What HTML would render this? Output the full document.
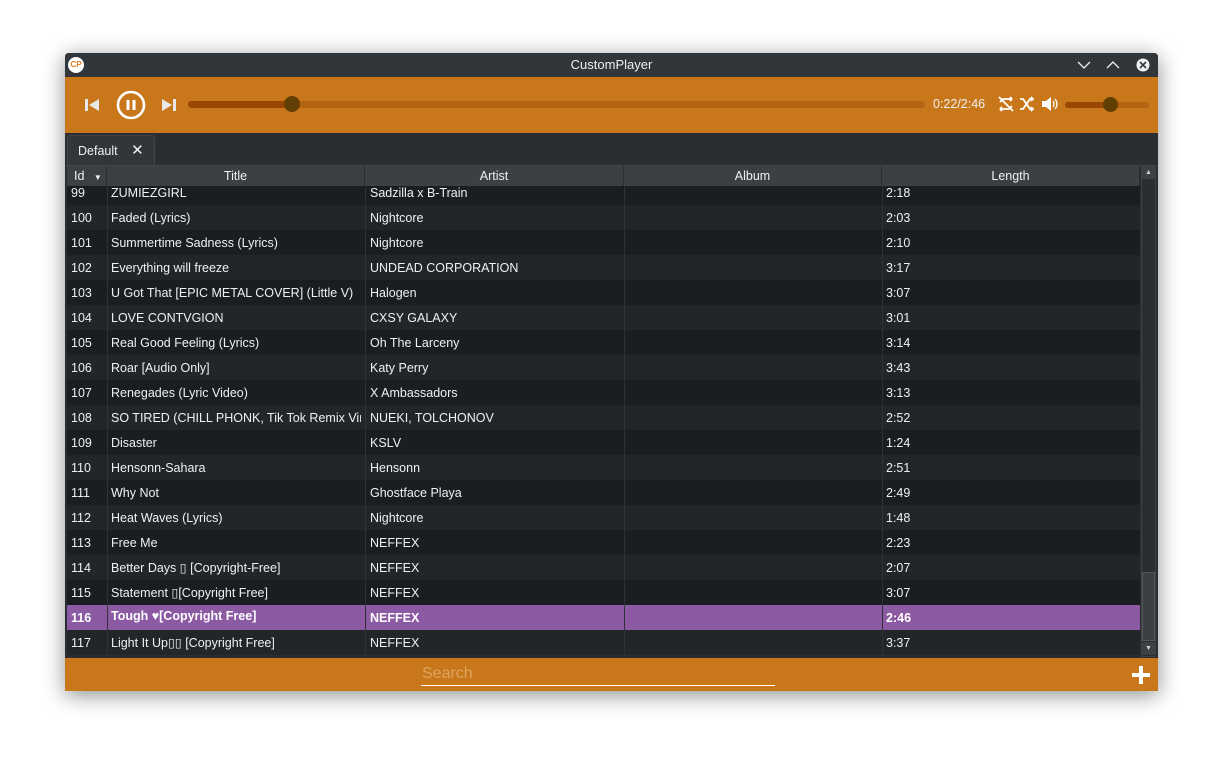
<!DOCTYPE html>
<html><head><meta charset="utf-8"><style>
*{margin:0;padding:0;box-sizing:border-box}
body{width:1223px;height:768px;background:#fff;position:relative;overflow:hidden;font-family:"Liberation Sans","DejaVu Sans",sans-serif;color:#eff0f1}
.a{position:absolute}
#win{left:65px;top:53px;width:1093px;height:638px;background:#2a2e32;box-shadow:0 4px 22px rgba(0,0,0,.45);border-radius:4px 4px 0 0;overflow:hidden}
.row{position:absolute;left:2px;width:1073px;height:25px;font-size:12.5px;line-height:26px}
.row span{position:absolute;top:0;white-space:nowrap;overflow:hidden}
.c0{left:4px;width:36px}.c1{left:44px;width:250px}.c2{left:303px;width:250px}.c4{left:819px}
.d{background:#1b1e21}.l{background:#232629}
.sep{position:absolute;top:0;width:1px;height:100%;background:#2e3236}
.sel{background:#8b5aa3;font-weight:bold;color:#fff}
.hd{position:absolute;top:113px;height:20px;background:#3c4045;font-size:12.5px;line-height:21px;text-align:center;border-right:1px solid #2a2e32}
</style></head><body>
<div id="win" class="a">
 <div class="a" style="left:0;top:0;width:1093px;height:24px;background:#31363b"></div>
 <div class="a" style="left:3px;top:4px;width:16px;height:16px;border-radius:50%;background:#fff;color:#e67e22;font-size:8px;font-weight:bold;line-height:16px;text-align:center">CP</div>
 <div class="a" style="left:0;top:4px;width:1093px;text-align:center;font-size:13px">CustomPlayer</div>
 <svg class="a" style="left:1010px;top:5px" width="80" height="14"><path d="M3 4l6 6 6-6M32 10l6-6 6 6" stroke="#eff0f1" stroke-width="1.3" fill="none"/><circle cx="68" cy="7" r="6.5" fill="#eff0f1"/><path d="M65 4l6 6M71 4l-6 6" stroke="#31363b" stroke-width="1.6"/></svg>
 <div class="a" style="left:0;top:24px;width:1093px;height:56px;background:#c8781b"></div>
 <svg class="a" style="left:18px;top:37px" width="100" height="30"><path d="M2 9h3v12H2zM16 9v12l-10-6z" fill="#e8e8e8"/><circle cx="48" cy="15" r="13" stroke="#fff" stroke-width="2.6" fill="none"/><path d="M43.5 10h3v10h-3zM49.5 10h3v10h-3z" fill="#fff"/><path d="M79 9v12l10-6zM90 9h3v12h-3z" fill="#e8e8e8"/></svg>
 <div class="a" style="left:123px;top:48px;width:737px;height:7px;border-radius:4px;background:#b26413"></div>
 <div class="a" style="left:123px;top:48px;width:106px;height:7px;border-radius:4px;background:#9a4704"></div>
 <div class="a" style="left:219px;top:43px;width:16px;height:16px;border-radius:50%;background:#613e02"></div>
 <div class="a" style="left:868px;top:44px;font-size:12.5px">0:22/2:46</div>
 <svg class="a" style="left:932px;top:42px" width="65" height="18"><path d="M3 7l3-3h9M15 4l-2-2M15 4l-2 2M15 11l-3 3H3M3 14l2-2M3 14l2 2M2 2l14 14" stroke="#fff" stroke-width="1.8" fill="none"/><path d="M23 4h3l7 10h3M23 14h3l7-10h3M34 2l2 2-2 2M34 12l2 2-2 2" stroke="#fff" stroke-width="1.8" fill="none"/><path d="M45 6h4l5-4v14l-5-4h-4z" fill="#fff"/><path d="M56 6q2 3 0 6M58 4q4 5 0 10" stroke="#fff" stroke-width="1.3" fill="none"/></svg>
 <div class="a" style="left:1000px;top:49px;width:84px;height:6px;border-radius:3px;background:#b26413"></div>
 <div class="a" style="left:1000px;top:49px;width:45px;height:6px;border-radius:3px;background:#9a4704"></div>
 <div class="a" style="left:1038px;top:44px;width:15px;height:15px;border-radius:50%;background:#613e02"></div>
 <div class="a" style="left:2px;top:82px;width:88px;height:31px;background:#31363b;border:1px solid #40454a;border-bottom:none;border-radius:3px 3px 0 0;font-size:12.5px;line-height:29px;padding-left:10px">Default <span style="margin-left:10px;font-size:15px">✕</span></div>
 <div class="a" style="left:1px;top:112px;width:1091px;height:1px;background:#40454a"></div>
 <div class="hd" style="left:2px;width:40px;text-align:left;padding-left:7px">Id <span style="font-size:8px;margin-left:6px">▼</span></div>
 <div class="hd" style="left:42px;width:258px">Title</div>
 <div class="hd" style="left:300px;width:259px">Artist</div>
 <div class="hd" style="left:559px;width:258px">Album</div>
 <div class="hd" style="left:817px;width:258px">Length</div>
 <div class="a" style="left:0;top:133px;width:1076px;height:472px;overflow:hidden">
 <div class="row d" style="top:-6px"><i class="sep" style="left:40px"></i><i class="sep" style="left:298px"></i><i class="sep" style="left:557px"></i><i class="sep" style="left:815px"></i><span class="c0">99</span><span class="c1">ZUMIEZGIRL</span><span class="c2">Sadzilla x B-Train</span><span class="c4">2:18</span></div>
 <div class="row l" style="top:19px"><i class="sep" style="left:40px"></i><i class="sep" style="left:298px"></i><i class="sep" style="left:557px"></i><i class="sep" style="left:815px"></i><span class="c0">100</span><span class="c1">Faded (Lyrics)</span><span class="c2">Nightcore</span><span class="c4">2:03</span></div>
 <div class="row d" style="top:44px"><i class="sep" style="left:40px"></i><i class="sep" style="left:298px"></i><i class="sep" style="left:557px"></i><i class="sep" style="left:815px"></i><span class="c0">101</span><span class="c1">Summertime Sadness (Lyrics)</span><span class="c2">Nightcore</span><span class="c4">2:10</span></div>
 <div class="row l" style="top:69px"><i class="sep" style="left:40px"></i><i class="sep" style="left:298px"></i><i class="sep" style="left:557px"></i><i class="sep" style="left:815px"></i><span class="c0">102</span><span class="c1">Everything will freeze</span><span class="c2">UNDEAD CORPORATION</span><span class="c4">3:17</span></div>
 <div class="row d" style="top:94px"><i class="sep" style="left:40px"></i><i class="sep" style="left:298px"></i><i class="sep" style="left:557px"></i><i class="sep" style="left:815px"></i><span class="c0">103</span><span class="c1">U Got That [EPIC METAL COVER] (Little V)</span><span class="c2">Halogen</span><span class="c4">3:07</span></div>
 <div class="row l" style="top:119px"><i class="sep" style="left:40px"></i><i class="sep" style="left:298px"></i><i class="sep" style="left:557px"></i><i class="sep" style="left:815px"></i><span class="c0">104</span><span class="c1">LOVE CONTVGION</span><span class="c2">CXSY GALAXY</span><span class="c4">3:01</span></div>
 <div class="row d" style="top:144px"><i class="sep" style="left:40px"></i><i class="sep" style="left:298px"></i><i class="sep" style="left:557px"></i><i class="sep" style="left:815px"></i><span class="c0">105</span><span class="c1">Real Good Feeling (Lyrics)</span><span class="c2">Oh The Larceny</span><span class="c4">3:14</span></div>
 <div class="row l" style="top:169px"><i class="sep" style="left:40px"></i><i class="sep" style="left:298px"></i><i class="sep" style="left:557px"></i><i class="sep" style="left:815px"></i><span class="c0">106</span><span class="c1">Roar [Audio Only]</span><span class="c2">Katy Perry</span><span class="c4">3:43</span></div>
 <div class="row d" style="top:194px"><i class="sep" style="left:40px"></i><i class="sep" style="left:298px"></i><i class="sep" style="left:557px"></i><i class="sep" style="left:815px"></i><span class="c0">107</span><span class="c1">Renegades (Lyric Video)</span><span class="c2">X Ambassadors</span><span class="c4">3:13</span></div>
 <div class="row l" style="top:219px"><i class="sep" style="left:40px"></i><i class="sep" style="left:298px"></i><i class="sep" style="left:557px"></i><i class="sep" style="left:815px"></i><span class="c0">108</span><span class="c1">SO TIRED (CHILL PHONK, Tik Tok Remix Vir...</span><span class="c2">NUEKI, TOLCHONOV</span><span class="c4">2:52</span></div>
 <div class="row d" style="top:244px"><i class="sep" style="left:40px"></i><i class="sep" style="left:298px"></i><i class="sep" style="left:557px"></i><i class="sep" style="left:815px"></i><span class="c0">109</span><span class="c1">Disaster</span><span class="c2">KSLV</span><span class="c4">1:24</span></div>
 <div class="row l" style="top:269px"><i class="sep" style="left:40px"></i><i class="sep" style="left:298px"></i><i class="sep" style="left:557px"></i><i class="sep" style="left:815px"></i><span class="c0">110</span><span class="c1">Hensonn-Sahara</span><span class="c2">Hensonn</span><span class="c4">2:51</span></div>
 <div class="row d" style="top:294px"><i class="sep" style="left:40px"></i><i class="sep" style="left:298px"></i><i class="sep" style="left:557px"></i><i class="sep" style="left:815px"></i><span class="c0">111</span><span class="c1">Why Not</span><span class="c2">Ghostface Playa</span><span class="c4">2:49</span></div>
 <div class="row l" style="top:319px"><i class="sep" style="left:40px"></i><i class="sep" style="left:298px"></i><i class="sep" style="left:557px"></i><i class="sep" style="left:815px"></i><span class="c0">112</span><span class="c1">Heat Waves (Lyrics)</span><span class="c2">Nightcore</span><span class="c4">1:48</span></div>
 <div class="row d" style="top:344px"><i class="sep" style="left:40px"></i><i class="sep" style="left:298px"></i><i class="sep" style="left:557px"></i><i class="sep" style="left:815px"></i><span class="c0">113</span><span class="c1">Free Me</span><span class="c2">NEFFEX</span><span class="c4">2:23</span></div>
 <div class="row l" style="top:369px"><i class="sep" style="left:40px"></i><i class="sep" style="left:298px"></i><i class="sep" style="left:557px"></i><i class="sep" style="left:815px"></i><span class="c0">114</span><span class="c1">Better Days ▯ [Copyright-Free]</span><span class="c2">NEFFEX</span><span class="c4">2:07</span></div>
 <div class="row d" style="top:394px"><i class="sep" style="left:40px"></i><i class="sep" style="left:298px"></i><i class="sep" style="left:557px"></i><i class="sep" style="left:815px"></i><span class="c0">115</span><span class="c1">Statement ▯[Copyright Free]</span><span class="c2">NEFFEX</span><span class="c4">3:07</span></div>
 <div class="row sel" style="top:419px"><i class="sep" style="left:40px"></i><i class="sep" style="left:298px"></i><i class="sep" style="left:557px"></i><i class="sep" style="left:815px"></i><span class="c0">116</span><span class="c1" style="top:-2px">Tough ♥[Copyright Free]</span><span class="c2">NEFFEX</span><span class="c4">2:46</span></div>
 <div class="row l" style="top:444px"><i class="sep" style="left:40px"></i><i class="sep" style="left:298px"></i><i class="sep" style="left:557px"></i><i class="sep" style="left:815px"></i><span class="c0">117</span><span class="c1">Light It Up▯▯ [Copyright Free]</span><span class="c2">NEFFEX</span><span class="c4">3:37</span></div>
 </div>
 <div class="a" style="left:1076px;top:113px;width:15px;height:491px;background:#2a2e32;border:1px solid #3c4045"></div>
 <div class="a" style="left:1077px;top:114px;width:13px;height:12px;background:#3c4045;color:#ccc;font-size:7px;text-align:center;line-height:12px">▲</div>
 <div class="a" style="left:1077px;top:519px;width:13px;height:69px;background:#3c4045;border:1px solid #52575c"></div>
 <div class="a" style="left:1077px;top:589px;width:13px;height:13px;background:#3c4045;color:#ccc;font-size:7px;text-align:center;line-height:13px">▼</div>
 <div class="a" style="left:0;top:605px;width:1093px;height:33px;background:#c8781b"></div>
 <div class="a" style="left:357px;top:612px;font-size:16px;color:#e0a35e">Search</div>
 <div class="a" style="left:356px;top:632px;width:354px;height:1px;background:#fff"></div>
 <div class="a" style="left:1067px;top:620px;width:18px;height:4px;background:#fff"></div>
 <div class="a" style="left:1074px;top:613px;width:4px;height:18px;background:#fff"></div>
</div>
</body></html>
